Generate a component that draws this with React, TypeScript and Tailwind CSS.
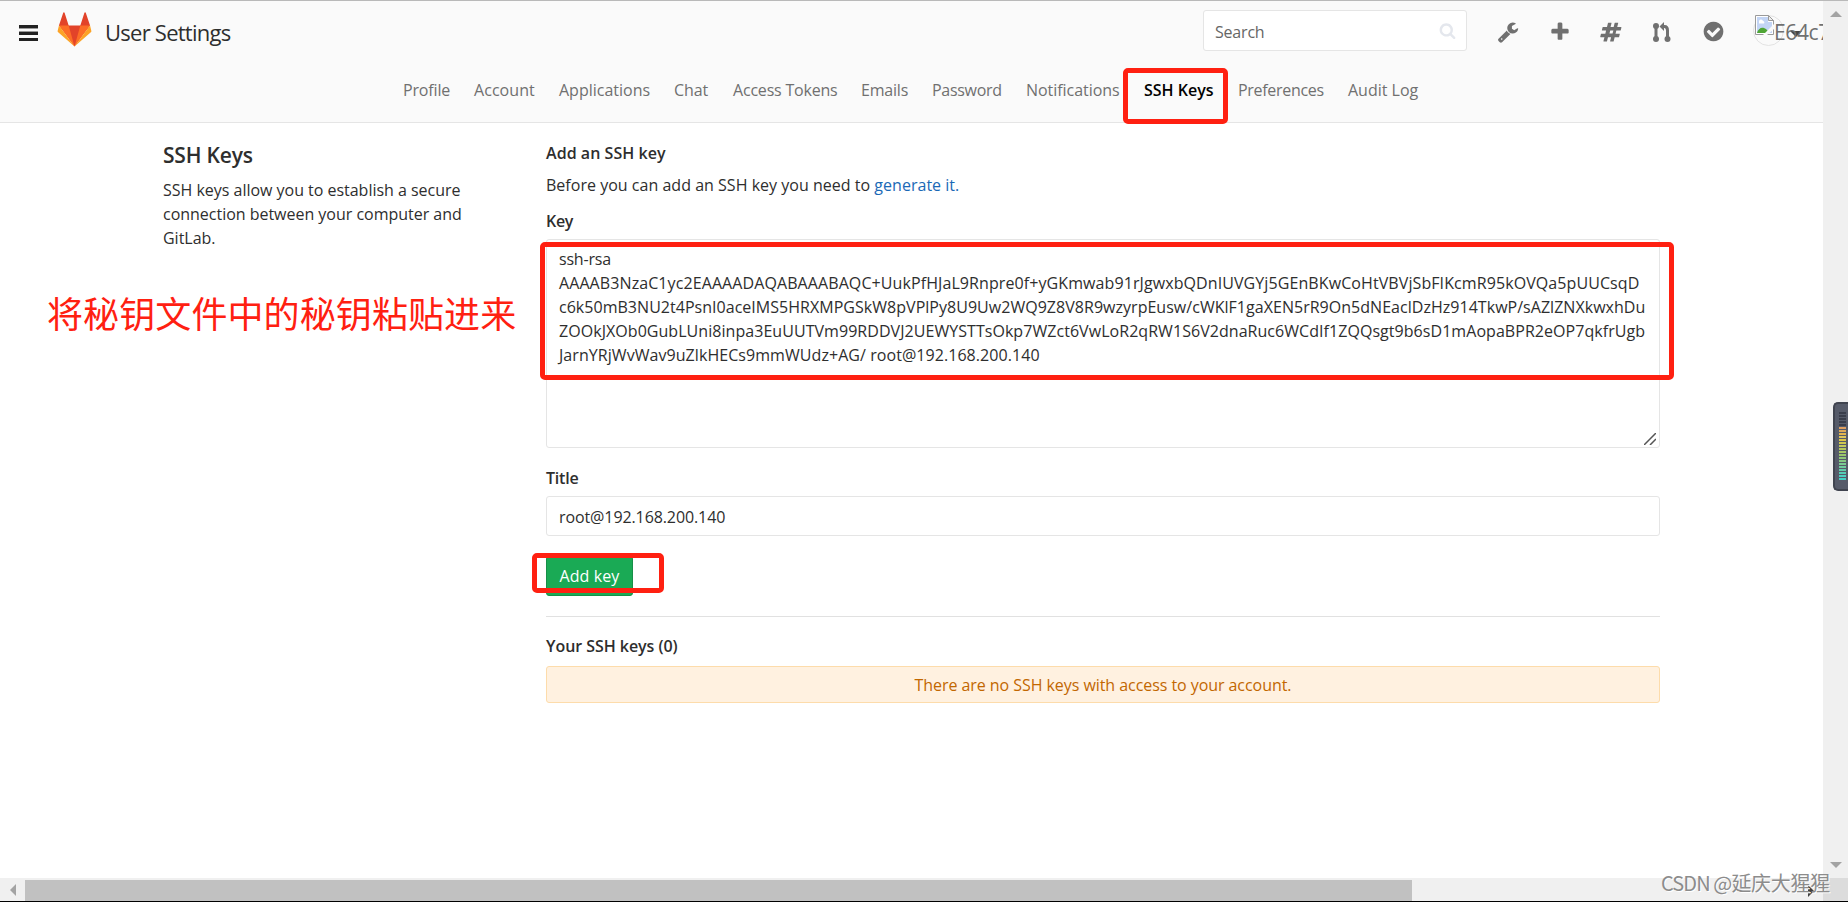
import { clsx } from "clsx";

const tabs = [
  { label: "Profile", cls: "w-[71px] tracking-[-0.15px]" },
  { label: "Account", cls: "w-[85px] tracking-[0.05px]" },
  { label: "Applications", cls: "w-[115px] tracking-[0px]" },
  { label: "Chat", cls: "w-[59px] tracking-[-0.1px]" },
  { label: "Access Tokens", cls: "w-[128px] tracking-[-0.2px]" },
  { label: "Emails", cls: "w-[71px] tracking-[-0.2px]" },
  { label: "Password", cls: "w-[94px] tracking-[-0.3px]" },
  { label: "Notifications", cls: "w-[118px] tracking-[-0.05px]" },
  { label: "SSH Keys", cls: "w-[94px] tracking-[0px]", active: true },
  { label: "Preferences", cls: "w-[110px] tracking-[-0.3px]" },
  { label: "Audit Log", cls: "w-[75px] tracking-[0px]" },
];

const keyLines = [
  { text: "ssh-rsa", cls: "tracking-[-0.2px]" },
  {
    text: "AAAAB3NzaC1yc2EAAAADAQABAAABAQC+UukPfHJaL9Rnpre0f+yGKmwab91rJgwxbQDnIUVGYj5GEnBKwCoHtVBVjSbFIKcmR95kOVQa5pUUCsqD",
    cls: "tracking-[0.09px]",
  },
  {
    text: "c6k50mB3NU2t4PsnI0aceIMS5HRXMPGSkW8pVPlPy8U9Uw2WQ9Z8V8R9wzyrpEusw/cWKlF1gaXEN5rR9On5dNEaclDzHz914TkwP/sAZlZNXkwxhDu",
    cls: "tracking-[0.03px]",
  },
  {
    text: "ZOOkJXOb0GubLUni8inpa3EuUUTVm99RDDVJ2UEWYSTTsOkp7WZct6VwLoR2qRW1S6V2dnaRuc6WCdIf1ZQQsgt9b6sD1mAopaBPR2eOP7qkfrUgb",
    cls: "tracking-[0.05px]",
  },
  { text: "JarnYRjWvWav9uZlkHECs9mmWUdz+AG/ root@192.168.200.140", cls: "tracking-[0.06px]" },
];

const icons = {
  wrench:
    "M448 1472q0-26-19-45t-45-19-45 19-19 45 19 45 45 19 45-19 19-45zm644-420l-682 682q-37 37-90 37-52 0-91-37l-106-108q-38-36-38-90 0-53 38-91l681-681q39 98 114.5 173.5t173.5 114.5zm634-435q0 39-23 106-47 134-164.5 217.5t-258.5 83.5q-185 0-316.5-131.5t-131.5-316.5 131.5-316.5 316.5-131.5q58 0 121.5 16.5t107.5 46.5q16 11 16 28t-16 28l-293 169v224l193 107q5-3 79-48.5t135.5-81 70.5-35.500q15 0 23.500 10t8.500 25z",
  plus: "M1600 736v192q0 40-28 68t-68 28h-416v416q0 40-28 68t-68 28h-192q-40 0-68-28t-28-68v-416h-416q-40 0-68-28t-28-68v-192q0-40 28-68t68-28h416v-416q0-40 28-68t68-28h192q40 0 68 28t28 68v416h416q40 0 68 28t28 68z",
  hash: "M1024 1024l64-256h-254l-64 256h254zm721-496l-56 224q-7 24-31 24h-327l-64 256h311q15 0 25 12 10 14 6 28l-56 224q-5 24-31 24h-327l-81 328q-7 24-31 24h-224q-16 0-26-12-9-12-6-28l78-312h-254l-81 328q-7 24-31 24h-225q-15 0-25-12-9-12-6-28l78-312h-311q-15 0-25-12-9-12-6-28l56-224q7-24 31-24h327l64-256h-311q-15 0-25-12-10-14-6-28l56-224q5-24 31-24h327l81-328q7-24 32-24h224q15 0 25 12 9 12 6 28l-78 312h254l81-328q7-24 32-24h224q15 0 25 12 9 12 6 28l-78 312h311q15 0 25 12 9 12 6 28z",
  check:
    "M1412 734q0-28-18-46l-91-90q-19-19-45-19t-45 19l-408 407-226-226q-19-19-45-19t-45 19l-91 90q-18 18-18 46 0 27 18 45l362 362q19 19 45 19 27 0 46-19l543-543q18-18 18-45zm252 162q0 209-103 385.5t-279.5 279.5-385.5 103-385.5-103-279.5-279.5-103-385.5 103-385.5 279.5-279.5 385.5-103 385.5 103 279.5 279.5 103 385.5z",
  search:
    "M1216 832q0-185-131.5-316.5t-316.5-131.5-316.5 131.5-131.5 316.5 131.5 316.5 316.5 131.5 316.5-131.5 131.5-316.5zm512 832q0 52-38 90t-90 38q-54 0-90-38l-343-342q-179 124-399 124-143 0-273.5-55.5t-225-150-150-225-55.5-273.5 55.5-273.5 150-225 225-150 273.5-55.5 273.5 55.5 225 150 150 225 55.5 273.5q0 220-124 399l343 343q37 37 37 90z",
};

const meter = [
  "#3a3e4b", "#3a3e4b", "#3a3e4b", "#3a3e4b", "#3a3e4b", "#e0a060", "#dba95a", "#e3b54f",
  "#ddc45a", "#dcc548", "#cfc950", "#c3c95a", "#b5c85c", "#a9c864", "#9bc86c", "#90c878",
  "#86c884", "#7ccb92", "#6fcb9c", "#63ccaa", "#57cdb5", "#4dcfc0", "#45d0c4",
];

function Icon({ d, className }: { d: string; className?: string }) {
  return (
    <svg viewBox="0 0 1792 1792" fill="currentColor" className={className}>
      <path d={d} />
    </svg>
  );
}

function Tanuki() {
  return (
    <svg viewBox="0 0 36 36" className="h-[35px] w-[35px]">
      <path fill="#e24329" d="M2 14l7.4 9.100L18 35.500l8.700-12.400L34 14l-4.400-13.300c-.2-.7-1.200-.7-1.400 0L24 14H12L7.800.7C7.600 0 6.600 0 6.400.7z" />
      <path fill="#fc6d26" d="M2 14l16 21.500L12 14zM34 14L18 35.500 24 14z" />
      <path fill="#fca326" d="M2 14L.7 19.200c-.2.600 0 1.300.5 1.600L18 35.500zM34 14l1.300 5.200c.2.600 0 1.300-.5 1.600L18 35.500z" />
    </svg>
  );
}

function MergeIcon() {
  return (
    <svg viewBox="0 0 20 22" className="h-[22px] w-5" fill="none" stroke="currentColor">
      <circle cx="4" cy="5" r="3" fill="currentColor" stroke="none" />
      <circle cx="4" cy="18" r="3" fill="currentColor" stroke="none" />
      <circle cx="15.5" cy="18" r="3" fill="currentColor" stroke="none" />
      <path d="M4 5v13M15.500 18V9.500Q15.500 5.500 12.500 5.500H11" strokeWidth="3" />
      <path d="M12 1v9L7.500 5.500z" fill="currentColor" stroke="none" />
    </svg>
  );
}

function BrokenImage() {
  return (
    <svg viewBox="0 0 19 20" className="h-5 w-[19px]">
      <path d="M.5.5h13l5 5v14H.5z" fill="#fff" stroke="#9a9a9a" />
      <path d="M2 2h11v5h4v11H2z" fill="#c3d5f5" />
      <path d="M4 7a2 2 0 0 1 4-1 1.500 1.500 0 0 1 1 2.500H4z" fill="#fff" />
      <path d="M2 18c1-4 4-6 7-5s4 3 5 5z" fill="#4fa535" />
      <path d="M19 9L8 20h4l7-6z" fill="#fafafa" />
      <path d="M13.500.5v5h5z" fill="#eee" stroke="#9a9a9a" />
    </svg>
  );
}

function Header() {
  return (
    <header className="h-[122px] shrink-0 overflow-hidden border-b border-[#e5e5e5] bg-[#fafafa]">
      <div className="flex h-[60px] w-[1850px] items-center pl-[19px]">
        <svg viewBox="0 0 19 17" className="mt-1 h-[17px] w-[19px]">
          <path d="M0 0h19v3H0zM0 7h19v3H0zM0 13h19v3H0z" fill="#222" />
          <path d="M0 3h19v1H0zM0 6h19v1H0z" fill="#999" />
        </svg>
        <div className="mb-1 ml-[19px]">
          <Tanuki />
        </div>
        <h1 className="ml-[13px] mt-[2px] w-[1098px] text-[22px] leading-[30px] tracking-[-0.75px] text-[#2e2e2e]">User Settings</h1>
        <div className="mb-[2px] flex h-[41px] w-[264px] items-center justify-between rounded-[3px] border border-[#e5e5e5] bg-white pl-[11px] pr-[10px] text-[#666]">
          <span className="pt-[3px] tracking-[-0.2px]">Search</span>
          <Icon d={icons.search} className="h-[17px] w-[17px] text-[#e4e7ed]" />
        </div>
        <div className="ml-[30px] mt-[1px] flex items-center text-[#707070]">
          <div className="w-[52px]"><Icon d={icons.wrench} className="h-[22px] w-[22px]" /></div>
          <div className="w-[51px]"><Icon d={icons.plus} className="h-[22px] w-[22px]" /></div>
          <div className="w-[52px]"><Icon d={icons.hash} className="h-[22px] w-[22px]" /></div>
          <div className="w-[50px]"><MergeIcon /></div>
          <div className="w-[53px]"><Icon d={icons.check} className="h-[23px] w-[23px]" /></div>
        </div>
        <div className="relative mb-[2px] flex h-[31px] items-center">
          <div className="absolute -left-[2px] top-0 h-[31px] w-[31px] rounded-full border border-[#e3e3e3]" />
          <svg viewBox="0 0 12 6" className="absolute left-[35px] top-[16px] h-[6px] w-3"><path d="M0 0h12L6 6z" fill="#444" /></svg>
          <div className="relative mb-[10px]"><BrokenImage /></div>
          <span className="relative pt-[6px] text-[21px] tracking-[-0.4px] text-[#707070]">E64c7</span>
        </div>
      </div>
      <nav className="flex pl-[403px] pt-[17px]">
        {tabs.map((tab) => (
          <a
            key={tab.label}
            className={clsx(
              "shrink-0 whitespace-nowrap leading-6",
              tab.cls,
              tab.active ? "font-semibold text-black" : "text-[#707070]"
            )}
          >
            {tab.label}
          </a>
        ))}
      </nav>
    </header>
  );
}

function Content() {
  return (
    <main className="flex flex-1 pl-[163px] leading-6">
      <aside className="w-[383px] shrink-0">
        <h4 className="mt-[18px] text-[21px] font-semibold leading-7 tracking-[-0.2px]">SSH Keys</h4>
        <p className="mt-[9px] whitespace-nowrap tracking-[-0.02px]">
          SSH keys allow you to establish a secure
          <br />
          connection between your computer and
          <br />
          GitLab.
        </p>
      </aside>
      <section className="w-[1114px] pt-[18px]">
        <h5 className="font-semibold tracking-[0.05px]">Add an SSH key</h5>
        <p className="mt-2 tracking-[0.02px]">
          Before you can add an SSH key you need to <a className="text-[#1b69b6]">generate it.</a>
        </p>
        <label className="mt-3 block font-semibold tracking-[-0.3px]">Key</label>
        <div className="relative mt-[6px] h-[209px] rounded-[3px] border border-[#e5e5e5] bg-white px-3 pt-[7px]">
          {keyLines.map((line) => (
            <p key={line.text} className={clsx("whitespace-nowrap", line.cls)}>{line.text}</p>
          ))}
          <svg viewBox="0 0 12 12" className="absolute bottom-[2px] right-[3px] h-3 w-3">
            <path d="M0 12L12 0M6 12l6-6" stroke="#555" strokeWidth="1.5" />
          </svg>
        </div>
        <label className="mt-[18px] block font-semibold tracking-[-0.2px]">Title</label>
        <div className="mt-[6px] h-10 rounded-[3px] border border-[#e5e5e5] px-3 pt-2 tracking-[-0.1px]">root@192.168.200.140</div>
        <button className="mt-5 block h-10 w-[87px] whitespace-nowrap rounded-[3px] border border-[#168f48] bg-[#1aaa55] tracking-[0.1px] text-white">Add key</button>
        <hr className="mt-5 border-[#e1e1e1]" />
        <h5 className="mt-[17px] font-semibold tracking-[-0.05px]">Your SSH keys (0)</h5>
        <div className="mt-2 flex h-[37px] items-center justify-center rounded-[3px] border border-[#fddcab] bg-[#fff1e0] tracking-[-0.06px] text-[#c26700]">
          There are no SSH keys with access to your account.
        </div>
      </section>
    </main>
  );
}

export default function App() {
  return (
    <div className="relative flex h-[902px] w-[1848px] flex-col overflow-hidden border-t border-[#b9b9b9] bg-white font-['Open_Sans','Noto_Sans_CJK_SC',sans-serif] text-[16px] text-[#2e2e2e]">
      <div className="flex min-h-0 flex-1">
        <div className="flex w-[1823px] shrink-0 flex-col overflow-hidden">
          <Header />
          <Content />
        </div>
        <div className="flex flex-1 flex-col items-center justify-between bg-[#f0f0f0] pb-[10px] pt-[10px]">
          <svg viewBox="0 0 12 6" className="h-[6px] w-3"><path d="M0 6h12L6 0z" fill="#a3a3a3" /></svg>
          <svg viewBox="0 0 12 6" className="h-[6px] w-3"><path d="M0 0h12L6 6z" fill="#a3a3a3" /></svg>
        </div>
      </div>
      <div className="flex h-6 shrink-0 border-b border-black bg-[#f0f0f0]">
        <div className="flex w-[25px] items-center justify-center">
          <svg viewBox="0 0 6 12" className="h-3 w-[6px]"><path d="M6 0v12L0 6z" fill="#a3a3a3" /></svg>
        </div>
        <div className="mt-[2px] w-[1387px] bg-[#c1c1c1]" />
        <div className="flex flex-1 items-center justify-end pr-[9px]">
          <svg viewBox="0 0 6 12" className="mt-[2px] h-3 w-[6px]"><path d="M0 0v12l6-6z" fill="#404040" /></svg>
        </div>
        <div className="w-[25px] bg-[#dcdcdc]" />
      </div>

      {/* annotations */}
      <div className="absolute left-[1123px] top-[67px] h-[56px] w-[105px] rounded-[5px] border-[5px] border-[#ff2011]" />
      <div className="absolute left-[540px] top-[241px] h-[138px] w-[1134px] rounded-[5px] border-[5px] border-[#ff2011]" />
      <div className="absolute left-[532px] top-[552px] h-[40px] w-[132px] rounded-[5px] border-[5px] border-[#ff2011]" />
      <p className="absolute left-[47px] top-[285px] whitespace-nowrap font-['Noto_Sans_CJK_SC',sans-serif] text-[36px] leading-[52px] tracking-[0.1px] text-[#ff2011]">将秘钥文件中的秘钥粘贴进来</p>

      {/* volume meter docked on the right edge */}
      <div className="absolute right-0 top-[401px] flex h-[89px] w-[15px] flex-col gap-px rounded-l-[5px] border-2 border-r-0 border-[#40444f] bg-[#565b69] pl-1 pt-2">
        {meter.map((color, i) => (
          <span key={i} className="h-[2px] w-[7px] shrink-0" style={{ backgroundColor: color }} />
        ))}
      </div>

      <p className="absolute left-[1661px] top-[867px] whitespace-nowrap font-['Noto_Sans_CJK_SC',sans-serif] text-[20px] leading-[30px] tracking-[-0.3px] text-[#8c8c8c] [text-shadow:1px_1px_0_#fff]">
        <span className="tracking-[-0.9px]">CSDN @</span>延庆大猩猩
      </p>
    </div>
  );
}
